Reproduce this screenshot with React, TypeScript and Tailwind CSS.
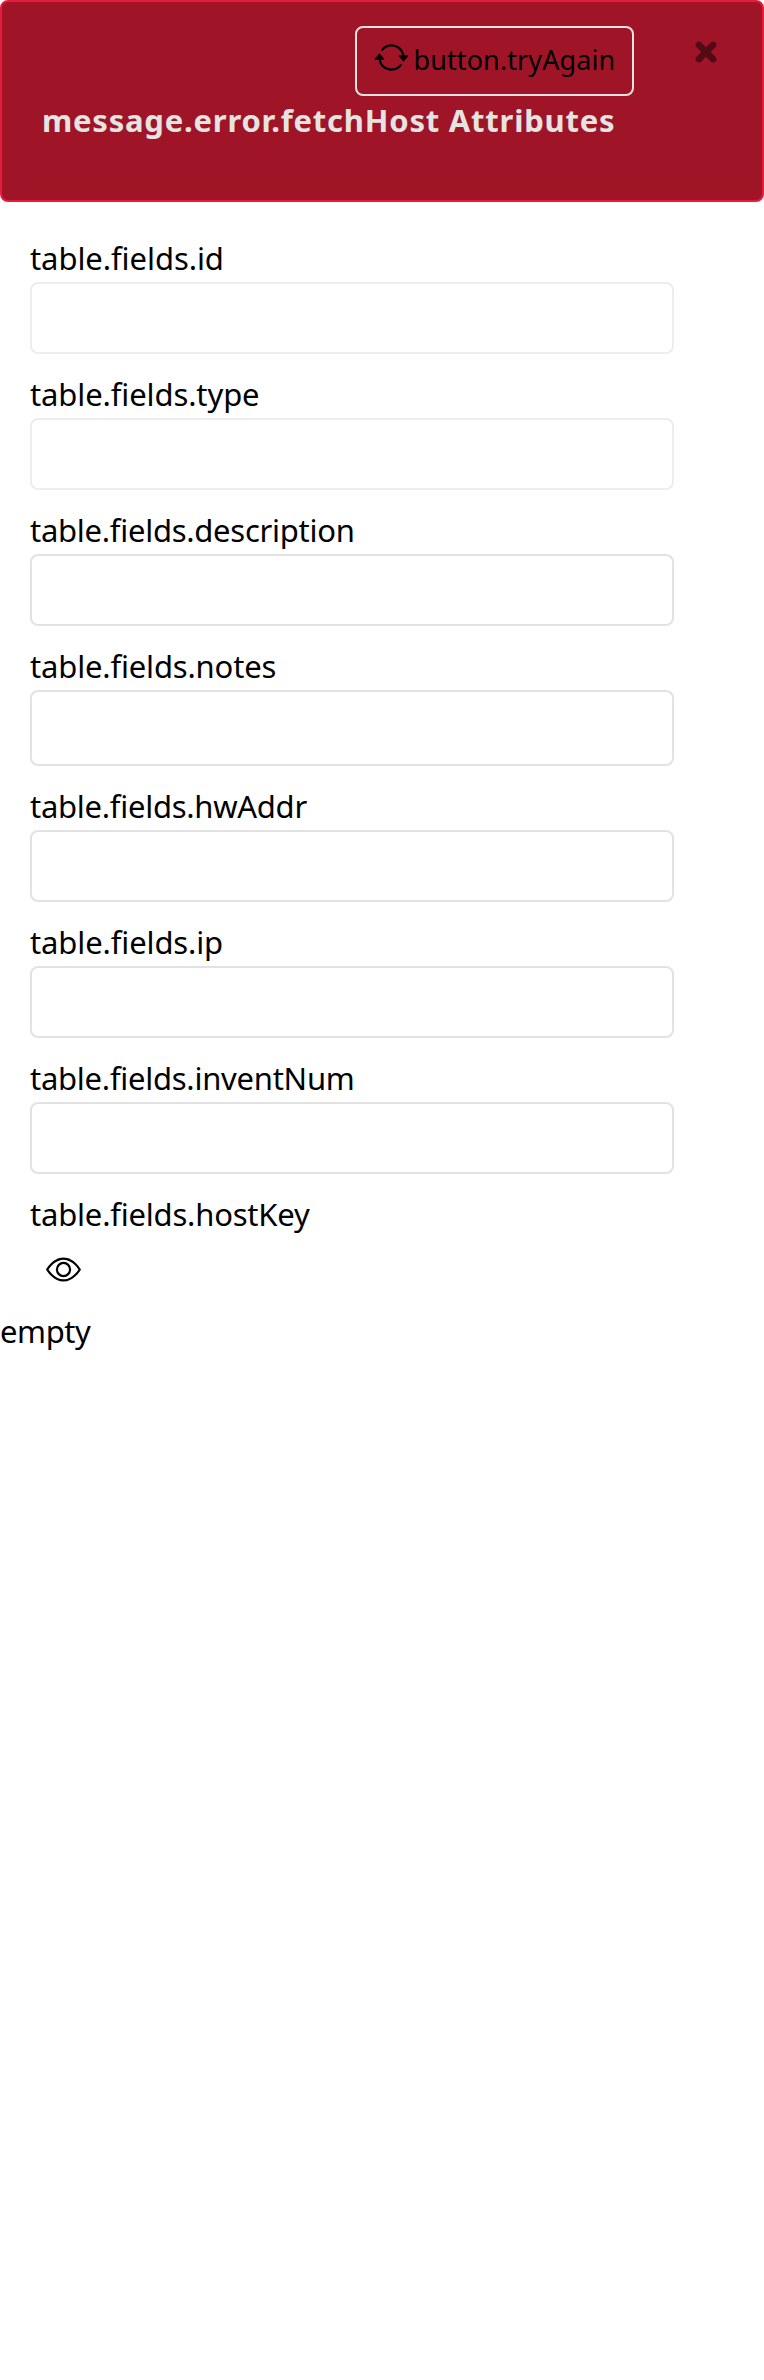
import { BsArrowRepeat, BsEye } from "react-icons/bs";

type Field = {
  label: string;
  tracking: string;
  disabled?: boolean;
  multiline?: boolean;
};

const fields: Field[] = [
  { label: "table.fields.id", tracking: "tracking-[-0.07px]", disabled: true },
  { label: "table.fields.type", tracking: "tracking-[-0.11px]", disabled: true },
  { label: "table.fields.description", tracking: "tracking-[-0.27px]" },
  { label: "table.fields.notes", tracking: "tracking-[-0.17px]", multiline: true },
  { label: "table.fields.hwAddr", tracking: "tracking-[-0.27px]" },
  { label: "table.fields.ip", tracking: "tracking-[-0.12px]" },
  { label: "table.fields.inventNum", tracking: "tracking-[-0.26px]" },
];

function ErrorBanner() {
  return (
    <div className="flex h-[202px] w-full items-start rounded-lg border-2 border-[#e81b3b] bg-[#a01428] pt-6 pl-10">
      <div className="flex w-[592px] flex-col items-end">
        <button
          type="button"
          className="flex h-[70px] w-[279px] items-start rounded-lg border-2 border-[#e6e4e1] pt-[11.5px] pl-[17px] text-black"
        >
          <BsArrowRepeat className="size-[35px] shrink-0" />
          <span className="ml-[4.5px] text-[27px] leading-10 tracking-[0.1px] whitespace-nowrap">
            button.tryAgain
          </span>
        </button>
        <h1 className="mt-1 w-full text-[31px] leading-10 font-bold tracking-[0.78px] whitespace-nowrap text-[#e6e4e1]">
          message.error.fetchHost Attributes
        </h1>
      </div>
      <button type="button" aria-label="Close" className="mt-[14px] ml-[60px] text-[#540a15]">
        <svg viewBox="0 0 24 24" className="size-6" fill="none" stroke="currentColor" strokeWidth="6.6" strokeLinecap="round">
          <path d="M4.9 4.9 19.1 19.1M19.1 4.9 4.9 19.1" />
        </svg>
      </button>
    </div>
  );
}

function FieldRow({ label, tracking, disabled, multiline }: Field) {
  const border = disabled ? "border-[#ededed]" : "border-[#e2e2e2]";
  const shape = "block w-[644px] resize-none rounded-lg border-2 bg-white px-4 text-[31px] outline-none";
  return (
    <div className="flex flex-col gap-1">
      <label className={`text-[31px] leading-10 ${tracking}`}>{label}</label>
      {multiline ? (
        <textarea className={`${shape} h-[76px] ${border}`} />
      ) : (
        <input className={`${shape} h-[72px] ${border}`} disabled={disabled} />
      )}
    </div>
  );
}

export default function App() {
  return (
    <div className="min-h-[2380px] w-full bg-white font-['Noto_Sans',sans-serif] text-black">
      <ErrorBanner />
      <div className="flex flex-col gap-5 pt-9 pl-[30px]">
        {fields.map((f) => (
          <FieldRow key={f.label} {...f} />
        ))}
        <div className="flex flex-col items-start">
          <span className="text-[31px] leading-10 tracking-[-0.2px]">table.fields.hostKey</span>
          <button type="button" aria-label="Show" className="mt-[18px] ml-4">
            <BsEye className="size-[35px]" />
          </button>
        </div>
      </div>
      <p className="mt-6 text-[31px] leading-10 tracking-[-0.4px]">empty</p>
    </div>
  );
}
